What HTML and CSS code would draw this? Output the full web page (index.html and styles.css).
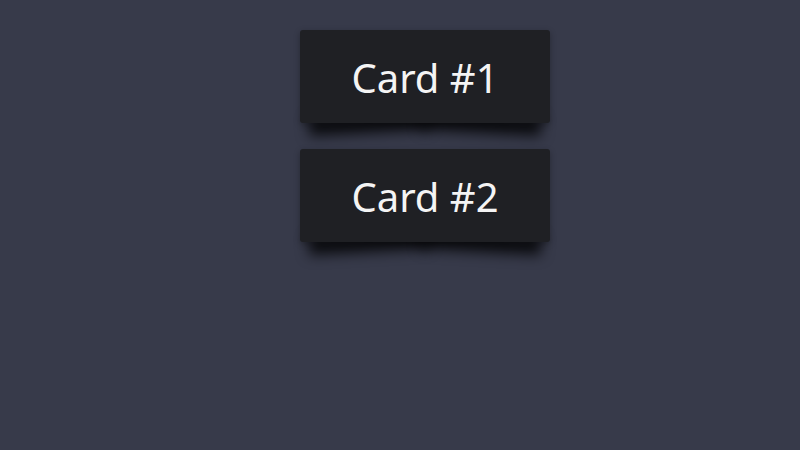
FILE: index.html
```html
<!DOCTYPE html>
<html lang="en">
<head>
<meta charset="utf-8">
<title>Cards</title>
<link rel="stylesheet" href="styles.css">
</head>
<body>
  <main class="stack">
    <div class="card"><span class="card-label">Card #1</span></div>
    <div class="card"><span class="card-label">Card #2</span></div>
  </main>
</body>
</html>
```
FILE: styles.css
```css
html, body {
  margin: 0;
  height: 100%;
}

body {
  background: #373a4a;
  font-family: "Noto Sans", "Open Sans", sans-serif;
}

/* own stacking context so card shadows sit above the page but below cards */
.stack {
  position: relative;
  z-index: 0;
  display: flex;
  flex-direction: column;
  align-items: flex-start;
  gap: 26px;
  padding: 30px 0 0 300px;
}

/* dark panel with lifted-corner shadow */
.card {
  position: relative;
  width: 250px;
  height: 93px;
  display: flex;
  align-items: center;
  justify-content: center;
  background: #1f2024;
  border-radius: 3px;
  box-shadow: 0 2px 6px rgba(0, 0, 0, 0.3);
}

.card::before,
.card::after {
  content: "";
  position: absolute;
  z-index: -1;
  bottom: 6px;
  width: 48%;
  height: 20%;
  background: rgba(0, 0, 0, 0.5);
  box-shadow: 0 16px 13px rgba(0, 0, 0, 0.8);
}

.card::before {
  left: 8px;
  transform: rotate(-3deg);
}

.card::after {
  right: 8px;
  transform: rotate(3deg);
}

.card-label {
  color: #f4f4f4;
  font-size: 40px;
  line-height: 1;
  padding-top: 2px;
}
```
